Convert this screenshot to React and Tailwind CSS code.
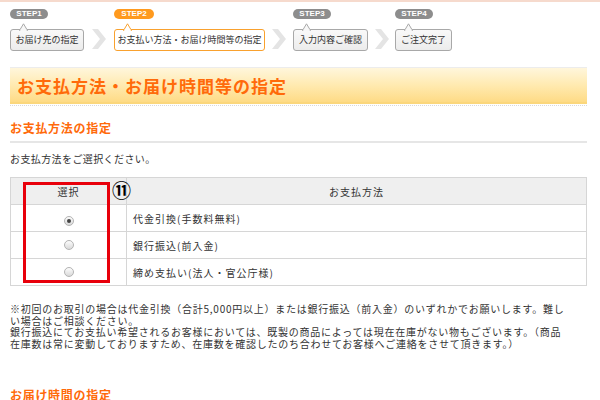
import React from "react";

const jp = { fontFamily: '"Noto Sans CJK JP", "Noto Sans", sans-serif' };

function Pill({ label, active }) {
  return (
    <div
      className={
        "h-[10px] rounded-full flex items-center justify-center text-white font-bold text-[8px] leading-none " +
        (active ? "bg-[#ff9a1e] w-[40px]" : "bg-[#8d8d8d] w-[38px]")
      }
      style={{ fontFamily: '"Liberation Sans", Arial, sans-serif' }}
    >
      {label}
    </div>
  );
}

function StepBox({ label, active, width }) {
  return (
    <div className="relative mt-[10px]" style={{ width }}>
      <svg className="absolute left-[9px] top-[-6px]" width="10" height="8" viewBox="0 0 10 8">
        <polygon points="0.5,7.5 4.5,0.8 8.5,7.5" fill={active ? "#ffffff" : "#f7f7f7"} stroke={active ? "#f9a12e" : "#a8a8a8"} strokeWidth="1" />
        <rect x="1.2" y="6.6" width="6.6" height="2" fill={active ? "#ffffff" : "#f7f7f7"} />
      </svg>
      <div
        className={
          "h-[22px] rounded-[3px] border flex items-center justify-center text-[9px] text-[#333] whitespace-nowrap " +
          (active ? "border-[#f9a12e] bg-white" : "border-[#a8a8a8] bg-gradient-to-b from-[#f9f9f9] to-[#ececec]")
        }
        style={jp}
      >
        {label}
      </div>
    </div>
  );
}

function Chevron({ width }) {
  return (
    <div className="flex justify-center items-end pb-[2px]" style={{ width }}>
      <svg width="16" height="20" viewBox="0 0 16 20">
        <polygon points="1,0 7,0 15,10 7,20 1,20 9,10" fill="#e4e4e4" />
      </svg>
    </div>
  );
}

function Step({ label, box, active, width }) {
  return (
    <div className="flex flex-col" style={{ width }}>
      <Pill label={label} active={active} />
      <StepBox label={box} active={active} width={width} />
    </div>
  );
}

function Radio({ checked }) {
  return (
    <span className="inline-flex w-[10px] h-[10px] rounded-full border border-[#b4b4b4] bg-gradient-to-b from-[#fdfdfd] to-[#d9d9d9] items-center justify-center">
      {checked && <span className="w-[4px] h-[4px] rounded-full bg-[#444]" />}
    </span>
  );
}

export default function App() {
  const rows = [
    { label: "代金引換(手数料無料)", checked: true },
    { label: "銀行振込(前入金)", checked: false },
    { label: "締め支払い(法人・官公庁様)", checked: false },
  ];
  return (
    <div className="w-[600px] h-[400px] overflow-hidden bg-white border-t-2 border-[#f6dacd]" style={jp}>
      {/* steps */}
      <div className="flex items-end pl-[10px] pt-[7px]">
        <Step label="STEP1" box="お届け先の指定" width={74} />
        <Chevron width={30} />
        <Step label="STEP2" box="お支払い方法・お届け時間等の指定" active width={151} />
        <Chevron width={28} />
        <Step label="STEP3" box="入力内容ご確認" width={75} />
        <Chevron width={27} />
        <Step label="STEP4" box="ご注文完了" width={57} />
      </div>

      {/* banner */}
      <div className="mx-[10px] mt-[16px] w-[577px]">
        <div className="h-[37px] border-t border-[#ececec] border-b-2 border-b-[#fbd77c] bg-gradient-to-b from-[#fff6dc] via-[#ffeab0] to-[#fedb85] flex items-center pl-[7px]">
          <span className="text-[17px] font-bold text-[#ff6a0a] tracking-[1px] leading-none">
            お支払方法・お届け時間等の指定
          </span>
        </div>
        <div className="h-[2px] mt-[1px] border-t border-dotted border-[#d9d9d9]" />
      </div>

      {/* subtitle */}
      <div className="mx-[10px] w-[577px] mt-[15px] pb-[7px] border-b-2 border-[#e6e6e6]">
        <div className="text-[12px] leading-[12px] font-bold text-[#ff6a0a] tracking-[0.7px]">お支払方法の指定</div>
      </div>

      <div className="mx-[10px] mt-[11px] text-[10px] leading-[10px] text-[#333] tracking-[0.4px]">
        お支払方法をご選択ください。
      </div>

      {/* table */}
      <div className="relative mx-[10px] mt-[13px] w-[577px]">
        <table className="w-full border-collapse text-[10px] text-[#333] tracking-[1px]">
          <thead>
            <tr className="h-[27px] bg-[#efefef]">
              <th className="w-[116px] border border-[#d6d6d6] font-normal">選択</th>
              <th className="border border-[#d6d6d6] font-normal">お支払方法</th>
            </tr>
          </thead>
          <tbody>
            {rows.map((r) => (
              <tr key={r.label} className="h-[27px]">
                <td className="border border-[#d6d6d6] text-center align-middle">
                  <span className="inline-flex items-center pt-[2px]">
                    <Radio checked={r.checked} />
                  </span>
                </td>
                <td className="border border-[#d6d6d6] pl-[6px] whitespace-nowrap">{r.label}</td>
              </tr>
            ))}
          </tbody>
        </table>
        <div className="absolute left-[13px] top-[5px] w-[87px] h-[101px] border-[3px] border-[#e8000b]" />
        <div className="absolute left-[102px] top-[3px] text-[19px] leading-[19px] text-black font-bold">⑪</div>
      </div>

      {/* notes */}
      <div className="mx-[10px] mt-[17px] text-[10px] leading-[11.5px] text-[#333] tracking-[0.75px] whitespace-nowrap">
        <div>※初回のお取引の場合は代金引換（合計5,000円以上）または銀行振込（前入金）のいずれかでお願いします。難し</div>
        <div>い場合はご相談ください。</div>
        <div>銀行振込にてお支払い希望されるお客様においては、既製の商品によっては現在在庫がない物もございます。（商品</div>
        <div>在庫数は常に変動しておりますため、在庫数を確認したのち合わせてお客様へご連絡をさせて頂きます。）</div>
      </div>

      <div className="mx-[10px] mt-[40px] text-[12px] leading-[12px] font-bold text-[#ff6a0a] tracking-[0.7px]">
        お届け時間の指定
      </div>
    </div>
  );
}
